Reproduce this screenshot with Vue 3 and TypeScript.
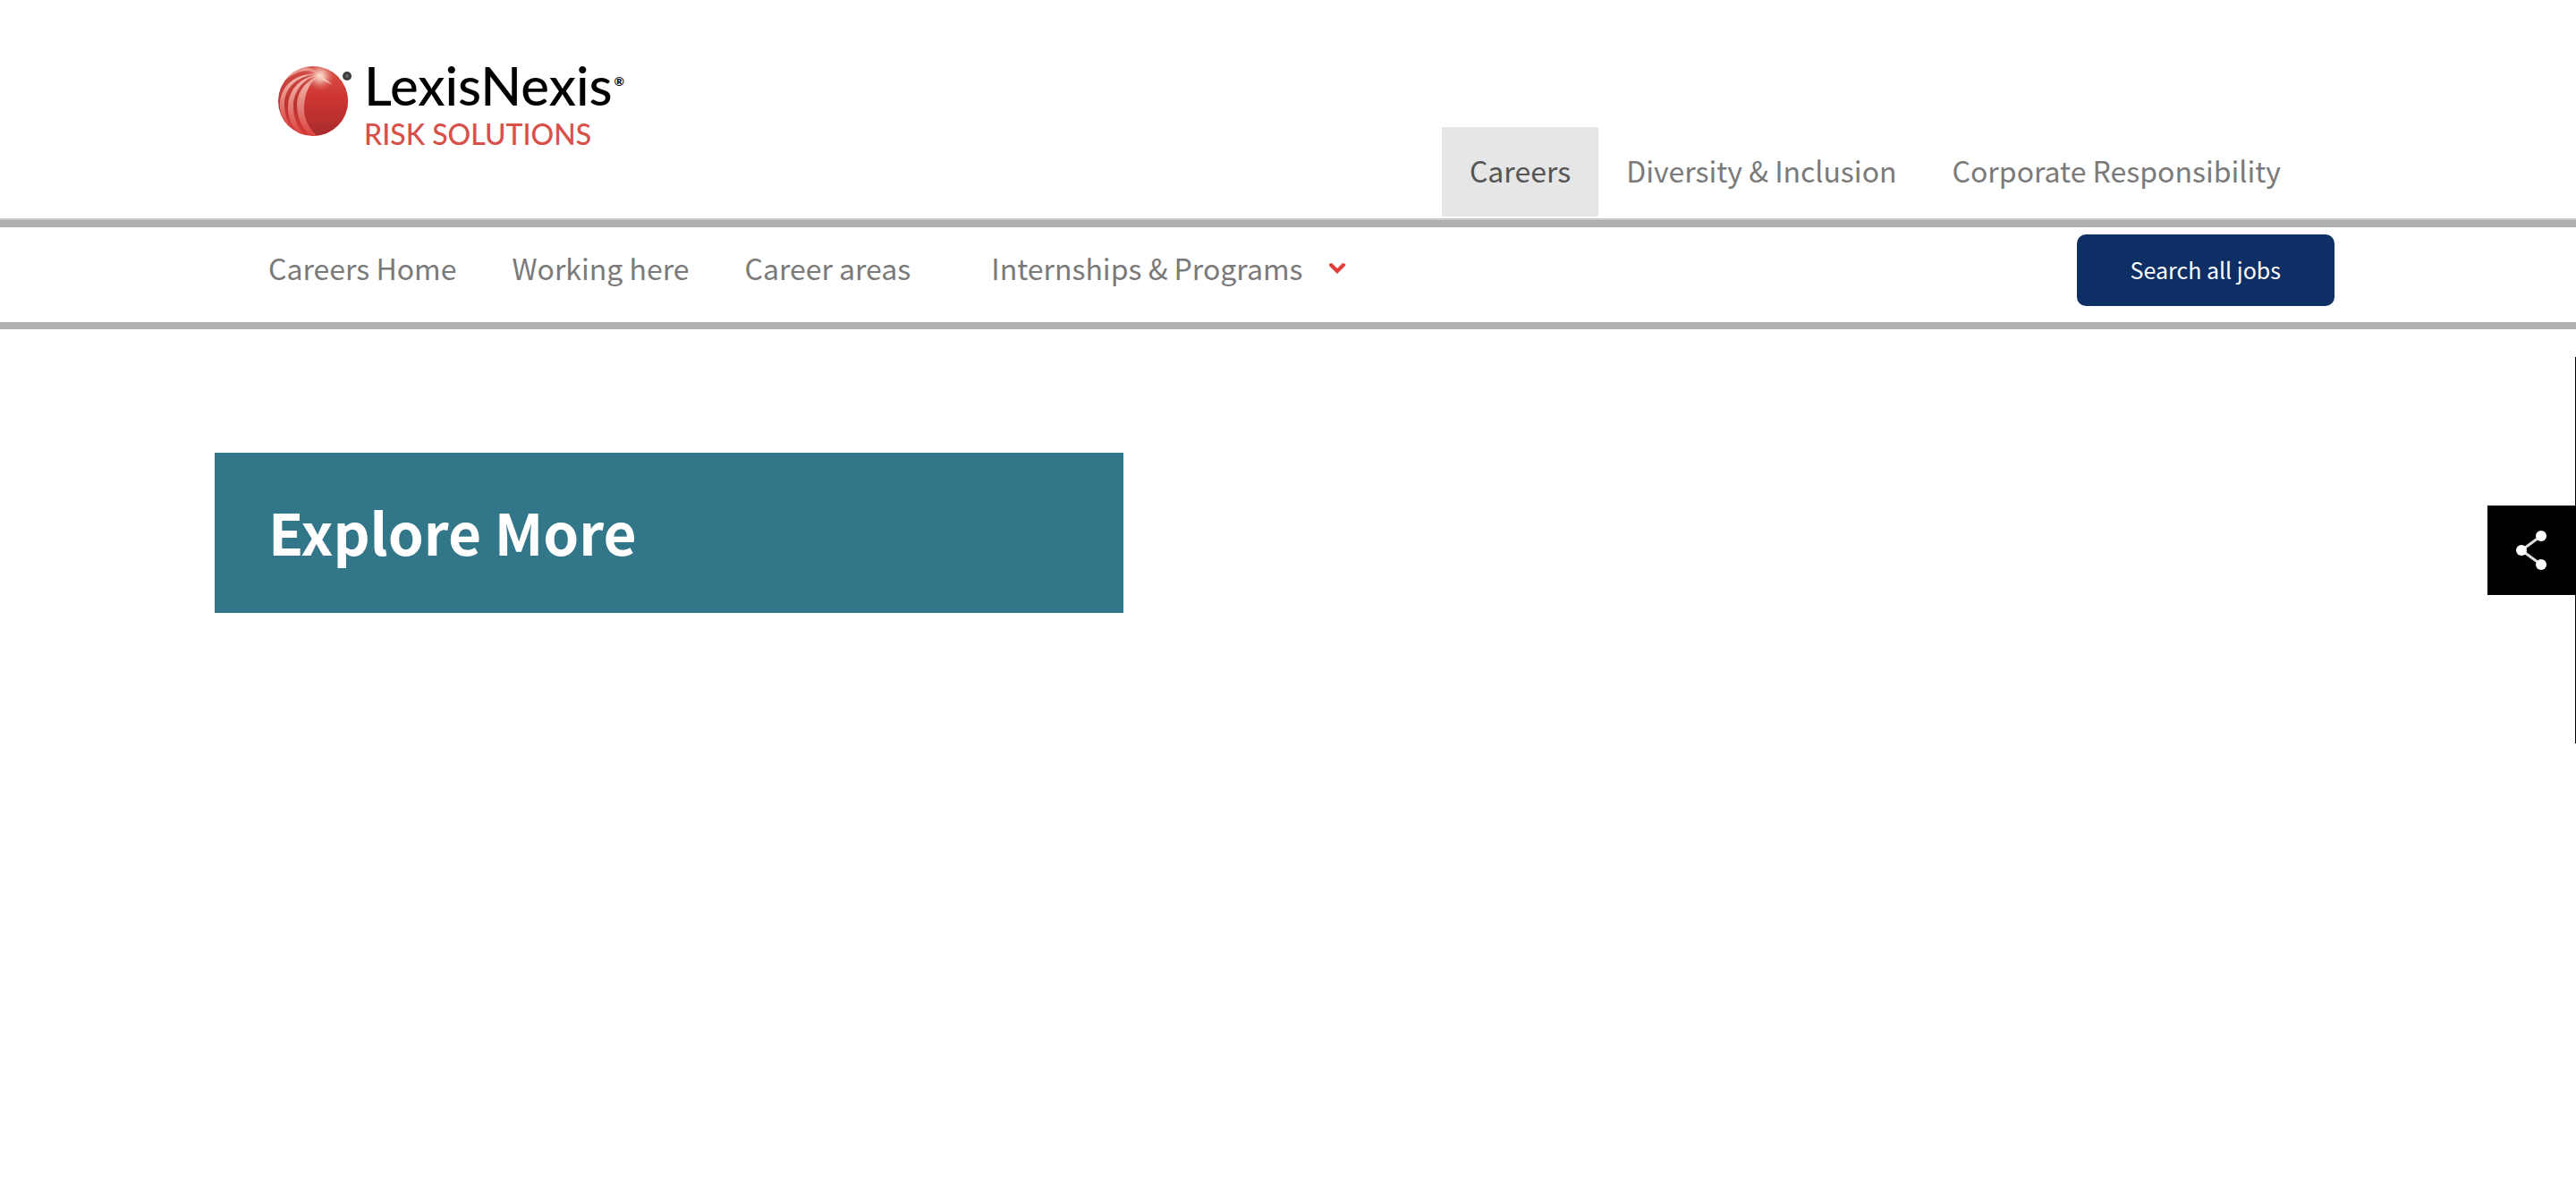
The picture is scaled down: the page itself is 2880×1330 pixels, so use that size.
<script setup lang="ts">
interface NavItem {
  label: string
  active?: boolean
  menu?: boolean
}

const topItems: NavItem[] = [
  { label: 'Careers', active: true },
  { label: 'Diversity & Inclusion' },
  { label: 'Corporate Responsibility' },
]

const mainItems: NavItem[] = [
  { label: 'Careers Home' },
  { label: 'Working here' },
  { label: 'Career areas' },
  { label: 'Internships & Programs', menu: true },
]
</script>

<template>
  <div class="page">
    <header class="masthead">
      <div class="container masthead-row">
        <a class="logo" href="#" aria-label="LexisNexis Risk Solutions">
          <svg class="ball" viewBox="0 0 84 82" aria-hidden="true">
            <defs>
              <linearGradient id="ballFill" x1="0" y1="0" x2="0" y2="1">
                <stop offset="0" stop-color="#d9534c" />
                <stop offset="0.45" stop-color="#cf3531" />
                <stop offset="1" stop-color="#a52c2d" />
              </linearGradient>
              <linearGradient id="underFill" x1="0" y1="0" x2="0" y2="1">
                <stop offset="0" stop-color="#d4504a" />
                <stop offset="0.55" stop-color="#bb3230" />
                <stop offset="1" stop-color="#d93a36" />
              </linearGradient>
              <linearGradient id="stripe" x1="0" y1="0" x2="0" y2="1">
                <stop offset="0" stop-color="#f4bdb2" />
                <stop offset="0.55" stop-color="#e27871" />
                <stop offset="1" stop-color="#dc403c" />
              </linearGradient>
              <radialGradient id="shine">
                <stop offset="0" stop-color="#fdeee0" />
                <stop offset="0.35" stop-color="#f3bdae" stop-opacity="0.8" />
                <stop offset="1" stop-color="#dc5a52" stop-opacity="0" />
              </radialGradient>
              <clipPath id="ballClip"><circle cx="40" cy="41" r="39" /></clipPath>
            </defs>
            <g clip-path="url(#ballClip)">
              <rect width="84" height="82" fill="url(#underFill)" />
              <path d="M48 13C36 18 30 34 30 50C30 62 36 72 46 82H84V0H60Z" fill="url(#ballFill)" />
              <path d="M48 13C36 18 30 34 30 50C30 62 36 72 46 82H40C28 72 22 60 22 46C22 32 30 18 48 13Z" fill="url(#stripe)" />
              <path d="M47 12C28 15 18 32 18 46C18 60 22 69 31 80H26C16 71 11 58 12 46C13 28 26 13 47 12Z" fill="url(#stripe)" />
              <path d="M46 11C24 11 8 26 8 44C8 56 11 63 17 72L10 68C4 58 2 50 3 41C6 22 22 9 46 11Z" fill="url(#stripe)" />
              <path d="M46 10C34 5 22 7 11 16L16 8C26 1 38 2 46 10Z" fill="#eb9a92" />
              <circle cx="48" cy="13" r="17" fill="url(#shine)" />
              <path d="M48 12L62 23L46 15Z" fill="#f6cbbd" />
            </g>
            <circle cx="78" cy="13" r="5" fill="#3c3c3c" />
            <circle cx="78" cy="13" r="2" fill="#666" />
          </svg>
          <span class="wordmark">
            <span class="name">LexisNexis<sup class="reg">®</sup></span>
            <span class="unit">RISK SOLUTIONS</span>
          </span>
        </a>
        <nav class="top-nav" aria-label="Company">
          <a v-for="item in topItems" :key="item.label" href="#" :class="{ active: item.active }">{{ item.label }}</a>
        </nav>
      </div>
    </header>

    <div class="main-bar">
      <div class="container main-row">
        <nav class="main-nav" aria-label="Careers">
          <a v-for="item in mainItems" :key="item.label" href="#" :class="{ 'has-menu': item.menu }">
            {{ item.label }}
            <svg v-if="item.menu" class="chevron" viewBox="0 0 18 14" aria-hidden="true">
              <path d="M0 3L3 2L9 8L15 2L18 3V5L9 14L0 5Z" fill="#e0403c" />
            </svg>
          </a>
        </nav>
        <button class="search" type="button">Search all jobs</button>
      </div>
    </div>

    <main class="container">
      <section class="banner">
        <h1>Explore More</h1>
      </section>
    </main>

    <aside class="share-rail">
      <button type="button" aria-label="Share">
        <svg viewBox="0 0 34 44" aria-hidden="true">
          <path d="M28 6L6 22L28 38" fill="none" stroke="#ddd" stroke-width="3" />
          <circle cx="28" cy="6" r="6" fill="#fff" />
          <circle cx="6" cy="22" r="6" fill="#fff" />
          <circle cx="28" cy="38" r="6" fill="#fff" />
        </svg>
      </button>
    </aside>
  </div>
</template>

<style>
body {
  margin: 0;
  background: #fff;
}
</style>

<style scoped>
.page {
  font-family: "Noto Sans CJK SC", "Noto Sans", sans-serif;
  color: #7a7a7a;
}

a {
  color: inherit;
  text-decoration: none;
}

.container {
  box-sizing: border-box;
  max-width: 2400px;
  margin: 0 auto;
}

.masthead {
  border-bottom: 2px solid #c9c9c9;
}

.masthead-row {
  display: flex;
  justify-content: space-between;
  align-items: flex-end;
  min-height: 244px;
  padding: 0 59px 2px 70px;
}

.logo {
  display: flex;
  align-self: flex-start;
  gap: 13px;
  padding-top: 72px;
}

.ball {
  width: 84px;
  height: 82px;
}

.wordmark {
  display: flex;
  flex-direction: column;
  font-family: Lato, sans-serif;
  font-weight: 500;
  white-space: nowrap;
}

.name {
  color: #000;
  font-size: 60px;
  line-height: 46px;
}

.reg {
  margin-left: 2px;
  font-size: 14px;
  font-weight: 700;
  line-height: 14px;
  vertical-align: 22px;
}

.unit {
  margin-top: 20px;
  color: #d8504a;
  font-size: 32px;
  line-height: 24px;
}

.top-nav,
.main-nav {
  display: flex;
  font-size: 32px;
  line-height: 40px;
}

.top-nav a {
  padding: 28px 31px 32px;
}

.top-nav .active {
  background: #e6e6e6;
  color: #555;
}

.main-bar {
  border-top: 8px solid #b0b0b0;
  border-bottom: 8px solid #b0b0b0;
}

.main-row {
  display: flex;
  justify-content: space-between;
  align-items: flex-start;
  min-height: 106px;
  padding: 8px 30px 0 29px;
}

.main-nav a {
  display: flex;
  align-items: center;
  padding: 17px 31px 23px;
}

.main-nav .has-menu {
  gap: 29px;
  margin-left: 28px;
}

.chevron {
  width: 18px;
  height: 14px;
}

.search {
  padding: 19px 60px 21px;
  border: 0;
  border-radius: 10px;
  background: #0d2f66;
  color: #fff;
  font-family: inherit;
  font-size: 25px;
  line-height: 40px;
  cursor: pointer;
}

.banner {
  width: 1016px;
  max-width: 100%;
  box-sizing: border-box;
  margin-top: 138px;
  padding: 48px 60px 52px;
  background: #327689;
}

h1 {
  margin: 0;
  color: #fff;
  font-size: 64px;
  font-weight: 700;
  line-height: 79px;
}

.share-rail {
  position: fixed;
  top: 399px;
  right: 0;
  display: flex;
  align-items: center;
  height: 432px;
  border-right: 1px solid #000;
}

.share-rail button {
  display: flex;
  align-items: center;
  justify-content: center;
  width: 98px;
  height: 100px;
  padding: 0;
  border: 0;
  background: #000;
  cursor: pointer;
}

.share-rail svg {
  width: 34px;
  height: 44px;
}
</style>
